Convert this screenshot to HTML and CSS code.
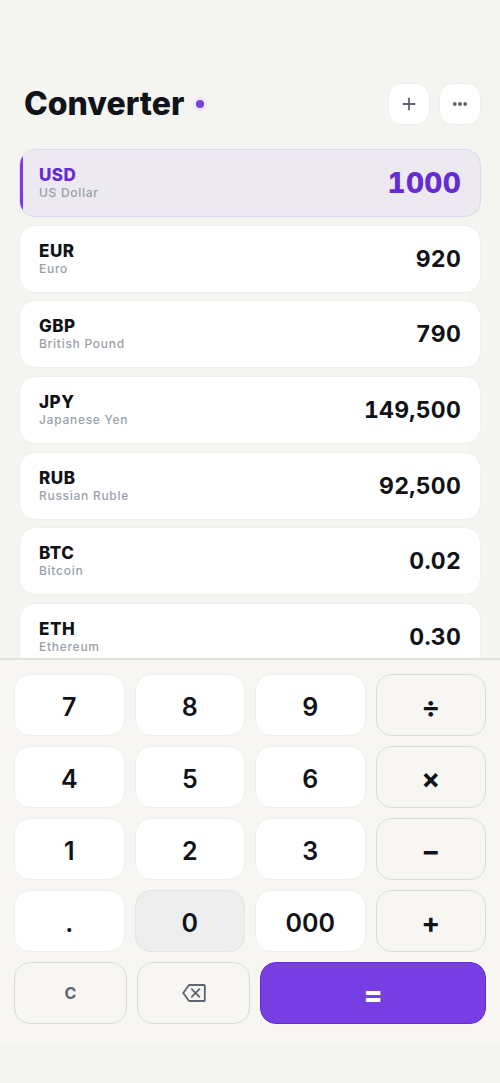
FILE: index.html
```html
<!DOCTYPE html>
<html lang="en">
<head>
    <meta charset="UTF-8">
    <meta name="viewport" content="width=device-width, initial-scale=1">
    <title>Converter</title>
    <link rel="stylesheet" href="styles.css">
</head>
<body>
<div id="app">
    <header class="header">
        <h1>Converter</h1>
        <span class="dot"></span>
        <div class="actions">
            <button type="button" class="icon-btn" aria-label="Add currency">
                <svg width="14" height="14" viewBox="0 0 14 14">
                    <path d="M7 .8v12.400M.8 7h12.400" stroke="currentColor" stroke-width="1.800" fill="none"/>
                </svg>
            </button>
            <button type="button" class="icon-btn" aria-label="More">
                <svg width="16" height="4" viewBox="0 0 16 4" fill="currentColor">
                    <circle cx="2.800" cy="2" r="1.900"/>
                    <circle cx="8" cy="2" r="1.900"/>
                    <circle cx="13.200" cy="2" r="1.900"/>
                </svg>
            </button>
        </div>
    </header>

    <ul class="list">
        <li class="row active">
            <div><div class="code">USD</div><div class="name">US Dollar</div></div>
            <div class="value">1000</div>
        </li>
        <li class="row">
            <div><div class="code">EUR</div><div class="name">Euro</div></div>
            <div class="value">920</div>
        </li>
        <li class="row">
            <div><div class="code">GBP</div><div class="name">British Pound</div></div>
            <div class="value">790</div>
        </li>
        <li class="row">
            <div><div class="code">JPY</div><div class="name">Japanese Yen</div></div>
            <div class="value">149,500</div>
        </li>
        <li class="row">
            <div><div class="code">RUB</div><div class="name">Russian Ruble</div></div>
            <div class="value">92,500</div>
        </li>
        <li class="row">
            <div><div class="code">BTC</div><div class="name">Bitcoin</div></div>
            <div class="value">0.02</div>
        </li>
        <li class="row">
            <div><div class="code">ETH</div><div class="name">Ethereum</div></div>
            <div class="value">0.30</div>
        </li>
    </ul>

    <div class="keypad">
        <div class="keys">
            <button type="button" class="key">7</button>
            <button type="button" class="key">8</button>
            <button type="button" class="key">9</button>
            <button type="button" class="key op">÷</button>
            <button type="button" class="key">4</button>
            <button type="button" class="key">5</button>
            <button type="button" class="key">6</button>
            <button type="button" class="key op">×</button>
            <button type="button" class="key">1</button>
            <button type="button" class="key">2</button>
            <button type="button" class="key">3</button>
            <button type="button" class="key op">−</button>
            <button type="button" class="key">.</button>
            <button type="button" class="key pressed">0</button>
            <button type="button" class="key">000</button>
            <button type="button" class="key op">+</button>
        </div>
        <div class="keys bottom">
            <button type="button" class="key tool">C</button>
            <button type="button" class="key tool" aria-label="Backspace">
                <svg width="24" height="18" viewBox="0 0 24 18" fill="none" stroke="currentColor" stroke-width="1.800" stroke-linejoin="round" stroke-linecap="round">
                    <path d="M7 1h15a.8.8 0 0 1 .8.8v14.400a.8.8 0 0 1-.8.8H7L1.200 9z"/>
                    <path d="M9.800 5.200l7.600 7.600M17.400 5.200l-7.600 7.600"/>
                </svg>
            </button>
            <button type="button" class="key equals">=</button>
        </div>
    </div>
</div>
</body>
</html>
```
FILE: styles.css
```css
*{
    margin: 0;
    padding: 0;
    box-sizing: border-box;
}

body{
    background-color: #f4f5f0;
    color: #101318;
    font-family: Inter, "Liberation Sans", sans-serif;
}

#app{
    display: flex;
    flex-direction: column;
    height: 100vh;
    padding: 83px 0 40px;
}

/* header */
.header{
    display: flex;
    align-items: center;
    padding: 0 19px 24px 24px;
}

.header h1{
    font-size: 32px;
    line-height: 42px;
    font-weight: 800;
}

.dot{
    width: 8px;
    height: 8px;
    margin-left: 12px;
    border-radius: 50%;
    background-color: #763ee3;
    box-shadow: 0 0 0 3px #ece8ef;
}

.actions{
    display: flex;
    gap: 9px;
    margin-left: auto;
}

.icon-btn{
    display: flex;
    align-items: center;
    justify-content: center;
    width: 42px;
    height: 42px;
    border: 1px solid #eeeeee;
    border-radius: 14px;
    background-color: #fff;
    color: #5d6472;
}

/* currencies */
.list{
    flex: 1;
    min-height: 0;
    display: flex;
    flex-direction: column;
    gap: 1.5%;
    padding: 0 19px;
    overflow: hidden;
    list-style: none;
}

.row{
    flex: none;
    display: flex;
    align-items: center;
    justify-content: space-between;
    position: relative;
    height: 68px;
    padding: 0 19px;
    border: 1px solid #efefef;
    border-radius: 16px;
    background-color: #fff;
    overflow: hidden;
}

.code{
    font-size: 17px;
    line-height: 20px;
    font-weight: 800;
    letter-spacing: 0.03em;
}

.name{
    font-size: 12px;
    line-height: 16px;
    font-weight: 500;
    letter-spacing: 0.06em;
    color: #9a9fab;
}

.value{
    font-size: 23px;
    font-weight: 700;
    letter-spacing: 0.01em;
    font-variant-numeric: tabular-nums;
}

.active{
    border-color: #dfd6f1;
    background-color: #ece9f0;
}

/* accent stripe on the left */
.active::before{
    content: "";
    position: absolute;
    top: -1px;
    bottom: -1px;
    left: -1px;
    width: 4px;
    background-color: #763ee3;
}

.active .code{
    color: #662bd3;
}

.active .value{
    font-size: 28px;
    font-weight: 800;
    color: #662bd3;
}

/* keypad */
.keypad{
    padding: 14px 14px 19px;
    border-top: 2px solid #e2e2df;
    background-color: #f7f6f2;
}

.keys{
    display: grid;
    grid-template-columns: repeat(4, 1fr);
    gap: 10px;
}

.bottom{
    grid-template-columns: 1fr 1fr 2fr;
    margin-top: 10px;
}

.key{
    display: flex;
    align-items: center;
    justify-content: center;
    height: 62px;
    padding-top: 3px;
    border: 1px solid #eeeff0;
    border-radius: 16px;
    background-color: #fff;
    color: #101318;
    font-family: inherit;
    font-size: 25px;
    font-weight: 600;
}

.op{
    border-color: #dbdcd8;
    background-color: #f7f6f2;
    font-size: 28px;
    font-weight: 700;
}

.pressed{
    border-color: #e2e3e4;
    background-color: #eeeeef;
}

.tool{
    padding-top: 0;
    border-color: #dbdcd8;
    background-color: #f7f6f2;
    color: #5d6472;
    font-size: 16px;
    font-weight: 700;
}

.equals{
    border-color: #662bd3;
    background-color: #763ee3;
    color: #fff;
    font-size: 28px;
    font-weight: 800;
}
```
